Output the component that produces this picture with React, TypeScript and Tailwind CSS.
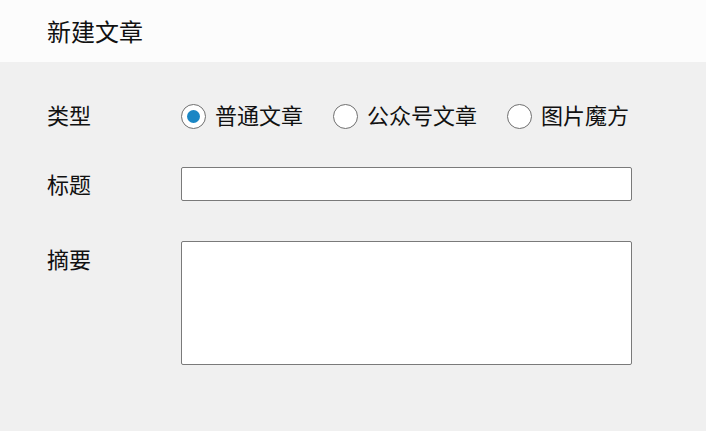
import { useState } from 'react';

const font = { fontFamily: '"Noto Sans CJK SC", "Noto Sans", sans-serif' };

const types = ['普通文章', '公众号文章', '图片魔方'];

export default function App() {
  const [type, setType] = useState(0);

  return (
    <div className="w-[706px] h-[431px] bg-[#f0f0f0] text-[#111] overflow-hidden" style={font}>
      <div className="h-[62px] bg-[#fcfcfc] flex items-center px-[47px]">
        <h1 className="text-[24px] leading-none">新建文章</h1>
      </div>

      <div className="px-[47px] pt-[37px] flex flex-col">
        <div className="flex items-center h-[34px]">
          <div className="w-[134px] text-[22px] pb-[3px]">类型</div>
          <div className="flex items-center">
            {types.map((t, i) => (
              <label
                key={t}
                className={`flex items-center cursor-pointer ${i > 0 ? 'ml-[30px]' : ''}`}
                onClick={() => setType(i)}
              >
                <span className="w-[25px] h-[25px] rounded-full border border-[#6f6f6f] bg-white flex items-center justify-center">
                  {type === i && <span className="w-[13px] h-[13px] rounded-full bg-[#1a86c4]" />}
                </span>
                <span className="ml-[9px] text-[22px] pb-[3px]">{t}</span>
              </label>
            ))}
          </div>
        </div>

        <div className="flex items-center h-[34px] mt-[34px]">
          <div className="w-[134px] text-[22px] pb-[2px]">标题</div>
          <input
            type="text"
            className="w-[451px] h-[34px] bg-white border border-[#7a7a7a] rounded-[2px] px-2 text-[18px] outline-none"
          />
        </div>

        <div className="flex mt-[40px]">
          <div className="w-[134px] text-[22px] leading-[34px]">摘要</div>
          <textarea className="w-[451px] h-[124px] bg-white border border-[#7a7a7a] rounded-[2px] px-2 py-1 text-[18px] outline-none resize-none" />
        </div>
      </div>
    </div>
  );
}
